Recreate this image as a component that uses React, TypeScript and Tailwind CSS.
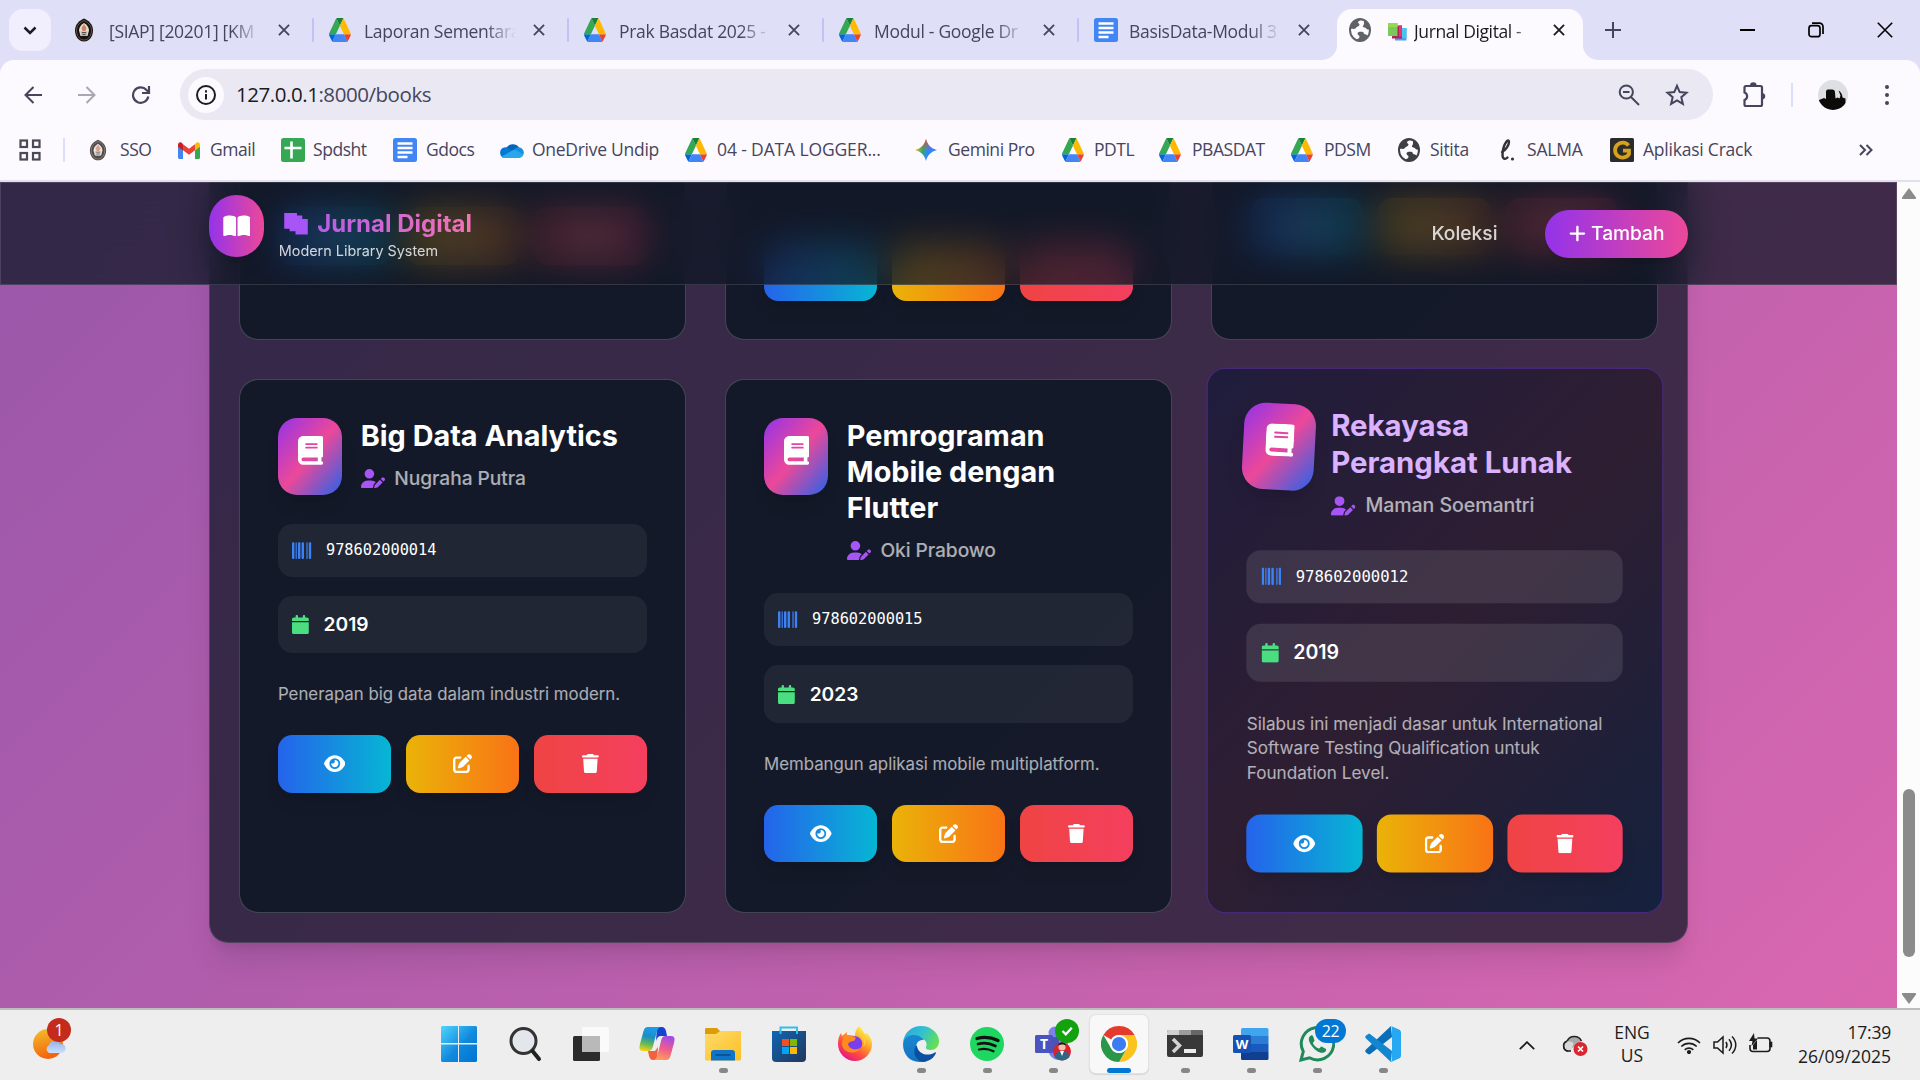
import type { ReactNode } from "react";
import {
  FaBarcode,
  FaBook,
  FaBookOpen,
  FaCalendar,
  FaEye,
  FaPenToSquare,
  FaPlus,
  FaTrash,
  FaUserPen,
} from "react-icons/fa6";

/* ---------- Favicons ---------- */

function DriveIcon({ className = "h-6 w-[22px]" }: { className?: string }) {
  return (
    <svg viewBox="0 0 88 78" preserveAspectRatio="none" className={className}>
      <path d="M6.6 66.9l3.9 6.6c.8 1.4 2 2.5 3.3 3.3L27.5 53H0c0 1.6.4 3.1 1.2 4.5z" fill="#0066da" />
      <path d="M43.7 25L29.9 1.2c-1.3.8-2.5 1.9-3.3 3.3L1.2 48.5A9 9 0 0 0 0 53h27.5z" fill="#34a853" />
      <path d="M73.6 76.8c1.3-.8 2.5-1.9 3.3-3.3l9.2-16c.8-1.4 1.2-2.9 1.2-4.5H59.8l5.9 11.5z" fill="#ea4335" />
      <path d="M43.7 25L57.4 1.2C56.1.4 54.6 0 52.9 0H34.4c-1.6 0-3.2.5-4.5 1.2z" fill="#188038" />
      <path d="M59.8 53H27.5L13.8 76.8c1.3.8 2.8 1.2 4.5 1.2h50.7c1.6 0 3.2-.5 4.5-1.2z" fill="#4285f4" />
      <path d="M73.4 26.5L60.7 4.5c-.8-1.4-2-2.5-3.3-3.3L43.7 25l16.1 28h27.4c0-1.6-.4-3.1-1.2-4.5z" fill="#ffba00" />
    </svg>
  );
}

function DocsIcon() {
  return (
    <svg viewBox="0 0 24 24" className="size-6">
      <rect width="24" height="24" rx="2.5" fill="#4285f4" />
      <path d="M4.5 5.500h15M4.5 10h15M4.5 14.500h15M4.5 19h10" stroke="#fff" strokeWidth="2.3" />
    </svg>
  );
}

function SheetIcon() {
  return (
    <svg viewBox="0 0 24 24" className="size-6">
      <rect width="24" height="24" rx="2.5" fill="#34a853" />
      <path d="M3.5 10h17M10.5 3.5v17" stroke="#fff" strokeWidth="2.6" />
    </svg>
  );
}

function Emblem({ faded = false }: { faded?: boolean }) {
  return (
    <svg viewBox="0 0 20 24" className={faded ? "h-[22px] w-[18px] opacity-75" : "h-6 w-5"}>
      <path d="M10 .5c4 2 9 5 9 12 0 5-3 11-9 11s-9-6-9-11c0-7 5-10 9-12z" fill="#17120f" />
      <path d="M10 2.500c3 1.500 7.500 4 7.500 10 0 4-2.500 9.500-7.500 9.500s-7.500-5.500-7.500-9.500c0-6 4.500-8.500 7.500-10z" fill="none" stroke="#8a7565" strokeWidth=".7" />
      <path d="M10 5c2.500 1.500 5 4 5 7.500l-1.500 5.500h-7L5 12.500C5 9 7.500 6.500 10 5z" fill="#e8dcd4" />
      <path d="M10 6l2.500 4-1 3h-3l-1-3z" fill="#c98563" />
      <path d="M6.500 13.500h7l-1 4.500h-5z" fill="#b9b3ae" />
      <path d="M8 14.500h4M8.500 16.500h3" stroke="#333" strokeWidth=".8" />
    </svg>
  );
}

function GlobeIcon({ color = "#5f6368" }: { color?: string }) {
  return (
    <svg viewBox="0 0 22 22" preserveAspectRatio="none" className="h-6 w-[22px]">
      <circle cx="11" cy="11" r="10" fill="none" stroke={color} strokeWidth="2" />
      <path
        d="M12.500 1.500c-1 .5-3.500 1-3.500 2.500 0 1.300 1.500 1 1.500 2.200S8.300 7.700 7.500 8.500 6.500 10 5 10s-3-.5-4 0A10 10 0 0 1 12.500 1.500zM7 21c.5-1.500 3.500-2 3.500-3.700 0-1.600-2-1.300-2-3s2-1.800 3.500-1.800 2.800.2 2.800 1.500 2.700.5 3.700 2.500A10 10 0 0 1 7 21zM15 5c0 1.500-1.500 2-1 3s2.500.5 3 1.500 2.500 1.500 4 1.500C21 8 19 3 15 2z"
        fill={color}
      />
    </svg>
  );
}

function GmailIcon() {
  return (
    <svg viewBox="0 0 22 17" className="h-[17px] w-[22px]">
      <path d="M0 2.500V15.500C0 16.300.7 17 1.500 17H5V7z" fill="#4285f4" />
      <path d="M22 2.500V15.500c0 .8-.7 1.500-1.500 1.500H17V7z" fill="#34a853" />
      <path d="M5 2.200V8.300L11 12.800l6-4.500V2.200L11 6.700z" fill="#ea4335" />
      <path d="M0 2.500C0 .4 2.300-.6 3.800.8L5 2.200V8.500L0 4.700z" fill="#c5221f" />
      <path d="M22 2.500c0-2.100-2.300-3.100-3.800-1.700L17 2.200v6.300l5-3.800z" fill="#fbbc04" />
    </svg>
  );
}

function OneDriveIcon() {
  return (
    <svg viewBox="0 0 25 16" className="h-4 w-[25px]">
      <path d="M7 6.500A7.500 7.500 0 0 1 20 5.500L15 12 5 7z" fill="#0364b8" />
      <path d="M5.500 5.500c1.500-.4 3 0 4 .8L18 11 6 16a5.300 5.300 0 0 1-.5-10.500z" fill="#0078d4" />
      <path d="M15.500 7A5 5 0 0 1 20 5.300a5.300 5.300 0 0 1 4.500 7L13 12z" fill="#1490df" />
      <path d="M5.500 16h14.300c2.400 0 4.500-1.700 4.700-3.700L15 7.600 2.500 14.700C3.300 15.500 4.400 16 5.500 16z" fill="#28a8ea" />
    </svg>
  );
}

function GeminiIcon() {
  return (
    <svg viewBox="0 0 22 22" className="size-[22px]">
      <defs>
        <linearGradient id="gem" x1="0" y1=".4" x2="1" y2=".6">
          <stop offset="0" stopColor="#f9c513" />
          <stop offset=".35" stopColor="#34a868" />
          <stop offset=".6" stopColor="#3186ff" />
          <stop offset="1" stopColor="#3186ff" />
        </linearGradient>
        <linearGradient id="gem2" x1="0" y1="0" x2="0" y2="1">
          <stop offset="0" stopColor="#f0433a" />
          <stop offset=".5" stopColor="#f0433a" stopOpacity="0" />
        </linearGradient>
      </defs>
      <path d="M11 0c1.200 5.500 5 9.500 11 11-6 1.500-9.800 5.500-11 11-1.200-5.500-5-9.500-11-11C6 9.500 9.800 5.500 11 0z" fill="url(#gem)" />
      <path d="M11 0c1.200 5.500 5 9.500 11 11-6 1.500-9.800 5.500-11 11-1.200-5.500-5-9.500-11-11C6 9.500 9.800 5.500 11 0z" fill="url(#gem2)" />
    </svg>
  );
}

function SalmaIcon() {
  return (
    <svg viewBox="0 0 16 22" className="h-[22px] w-4">
      <path d="M3 13c4-2 7-7 7-10 0-2-1.500-2-2.500-.5C5 6 3.500 12 3.500 16c0 4 2.500 5 5 2.500" fill="none" stroke="#333" strokeWidth="2.400" strokeLinecap="round" />
      <circle cx="13.500" cy="20" r="1.600" fill="#333" />
    </svg>
  );
}

function CrackIcon() {
  return (
    <svg viewBox="0 0 24 24" className="size-6">
      <rect width="24" height="24" rx="1.500" fill="#2b2b2b" />
      <path d="M18.500 7.500A7.500 7.500 0 1 0 19 16v-3.300h-6" fill="none" stroke="#d4a21c" strokeWidth="3.800" />
    </svg>
  );
}

function BooksEmoji() {
  return (
    <svg viewBox="0 0 19 18" className="h-[18px] w-[19px]">
      <rect x="7" y="5" width="11.500" height="12.500" fill="#45a5e8" />
      <rect x="13" y="5" width="5.500" height="10" fill="#4cc3f0" />
      <rect x="4" y="2.500" width="10" height="13" fill="#b0235e" />
      <rect x="11" y="2.500" width="3" height="11" fill="#e8336d" />
      <rect x="0" y="0" width="9.500" height="13" fill="#7bc95a" />
      <rect x="0" y="0" width="9.500" height="4" fill="#98d850" />
    </svg>
  );
}

function Cross({ className = "size-[13px]" }: { className?: string }) {
  return (
    <svg viewBox="0 0 13 13" className={className} fill="none" stroke="currentColor" strokeWidth="2">
      <path d="M1 1l11 11M12 1L1 12" />
    </svg>
  );
}

/* ---------- Browser chrome ---------- */

const tabs: { icon: ReactNode; title: string }[] = [
  { icon: <Emblem />, title: "[SIAP] [20201] [KM" },
  { icon: <DriveIcon />, title: "Laporan Sementara" },
  { icon: <DriveIcon />, title: "Prak Basdat 2025 -" },
  { icon: <DriveIcon />, title: "Modul - Google Dr" },
  { icon: <DocsIcon />, title: "BasisData-Modul 3" },
];

function TabStrip() {
  return (
    <div className="flex h-[60px] w-full bg-[#e0dff8] text-[#45455c]">
      <div className="flex w-[59px] shrink-0 items-center pl-[9px]">
        <div className="flex h-[42px] w-[42px] items-center justify-center rounded-[14px] bg-[#f1eefe] text-[#1b1b22]">
          <svg viewBox="0 0 14 9" className="h-[9px] w-[14px]" fill="none" stroke="currentColor" strokeWidth="2.500">
            <path d="M1.500 1.500L7 7l5.500-5.500" />
          </svg>
        </div>
      </div>
      {tabs.map((t, i) => (
        <div key={t.title} className="relative flex w-[255px] shrink-0 items-center pl-[15px]">
          <div className="flex w-[35px] shrink-0 items-center">{t.icon}</div>
          <div className="w-[152px] whitespace-nowrap pt-[3px] text-[17.500px] tracking-[-0.3px] [mask-image:linear-gradient(to_right,#000_80%,transparent)]">
            {t.title}
          </div>
          <Cross className="ml-[17px] size-[12px]" />
          {i < 4 && <div className="absolute right-0 top-[18px] h-6 w-[2px] rounded bg-[#c2c1fa]" />}
        </div>
      ))}
      <div className="relative mt-[9px] flex w-[246px] shrink-0 items-center rounded-t-[15px] bg-[#fcf9ff] pb-[9px] pl-[12px] text-[#1b1b22] ml-[3px]">
        <svg viewBox="0 0 15 15" className="absolute -left-[15px] bottom-0 size-[15px]">
          <path d="M15 0v15H0A15 15 0 0 0 15 0z" fill="#fcf9ff" />
        </svg>
        <svg viewBox="0 0 15 15" className="absolute -right-[15px] bottom-0 size-[15px]">
          <path d="M0 0v15h15A15 15 0 0 1 0 0z" fill="#fcf9ff" />
        </svg>
        <GlobeIcon />
        <div className="ml-[17px] mt-1">
          <BooksEmoji />
        </div>
        <div className="ml-[7px] w-[118px] whitespace-nowrap pt-[3px] text-[17.500px] tracking-[-0.4px] [mask-image:linear-gradient(to_right,#000_84%,transparent)]">
          Jurnal Digital -
        </div>
        <Cross className="ml-[21px] size-[12px]" />
      </div>
      <div className="flex flex-1 items-center pl-[22px]">
        <svg viewBox="0 0 16 16" className="size-4" stroke="currentColor" strokeWidth="2">
          <path d="M8 0v16M0 8h16" />
        </svg>
        <div className="ml-auto flex w-[180px] items-center justify-between pr-[27px] text-black">
          <div className="h-[2px] w-[15px] bg-black" />
          <svg viewBox="0 0 16 16" className="size-4" fill="none" stroke="currentColor" strokeWidth="1.700">
            <rect x="1" y="3.700" width="11" height="11" rx="2.500" />
            <path d="M4 1.200h7.500a3.500 3.500 0 0 1 3.500 3.500V12" />
          </svg>
          <svg viewBox="0 0 16 16" className="size-4" fill="none" stroke="currentColor" strokeWidth="1.600">
            <path d="M.8.8l14.400 14.400M15.200.8L.8 15.200" />
          </svg>
        </div>
      </div>
    </div>
  );
}

function Toolbar() {
  return (
    <div className="flex h-[60px] items-center pl-[24px] pt-[9px] text-[#45455c]">
      <svg viewBox="0 0 18 18" className="size-[18px]" fill="none" stroke="currentColor" strokeWidth="2">
        <path d="M18 9H2M9.500 1L1.500 9l8 8" />
      </svg>
      <svg viewBox="0 0 18 18" className="ml-9 size-[18px] text-[#a9a7b4]" fill="none" stroke="currentColor" strokeWidth="2">
        <path d="M0 9h16M8.500 1l8 8-8 8" />
      </svg>
      <svg viewBox="0 0 20 18" className="ml-[35px] mr-px h-[18px] w-5" fill="none" stroke="currentColor" strokeWidth="2.200">
        <path d="M17.300 10.500A7.700 7.700 0 1 1 15.500 4L17.500 6" />
        <path d="M18 0v7h-7" />
      </svg>
      <div className="ml-[28px] flex h-[51px] w-[1533px] items-center rounded-full bg-[#eae8f3] pl-[8px]">
        <div className="flex size-9 items-center justify-center rounded-full bg-[#fcf9ff] text-[#1b1b22]">
          <svg viewBox="0 0 20 20" className="size-5" fill="none" stroke="currentColor" strokeWidth="2">
            <circle cx="10" cy="10" r="9" />
            <path d="M10 9v5.500M10 5.300v2.200" />
          </svg>
        </div>
        <div className="ml-[12px] text-[20.500px] tracking-[-0.45px] text-[#45455c]">
          <span className="text-[#1b1b22]">127.0.0.1</span>:8000/books
        </div>
        <svg viewBox="0 0 22 22" className="ml-auto mr-[25px] size-[22px]" fill="none" stroke="currentColor" strokeWidth="2">
          <circle cx="8.300" cy="8" r="6.600" />
          <path d="M13 13l8 8M5 8h6.500" />
        </svg>
        <svg viewBox="0 0 24 24" className="mr-[24px] size-6" fill="none" stroke="currentColor" strokeWidth="2">
          <path d="M12 2.800l2.700 6.300 6.800.6-5.200 4.500 1.600 6.700-5.900-3.600-5.900 3.600 1.600-6.700-5.200-4.500 6.800-.6z" />
        </svg>
      </div>
      <svg viewBox="0 0 26 26" className="ml-[28px] size-[26px]">
        <path
          d="M3.500 5.500a1.500 1.500 0 0 1 1.500-1.500h14.500A1.500 1.500 0 0 1 21 5.500v17a1.500 1.500 0 0 1-1.500 1.500H5a1.500 1.500 0 0 1-1.500-1.500V18a4 4 0 0 0 0-7.500z"
          fill="none"
          stroke="currentColor"
          strokeWidth="2.200"
        />
        <path d="M9 3.500a3.300 3.300 0 0 1 6.600 0zM21.500 11a3.300 3.300 0 0 1 0 6.500z" fill="currentColor" />
      </svg>
      <div className="ml-[24px] h-6 w-[2px] bg-[#dcdffc]" />
      <svg viewBox="0 0 30 30" className="ml-[25px] size-[30px]">
        <defs>
          <clipPath id="av">
            <circle cx="15" cy="15" r="15" />
          </clipPath>
        </defs>
        <g clipPath="url(#av)">
          <rect width="30" height="30" fill="#dedfe2" />
          <path d="M1 20l5-2 2 1v-7c0-2 1-2.500 3-2.500h3c2 0 3 1 3 3l.500 6 2-1 2 1 1-3-2-5c2 1 4 4 4 7l3 1v12H0z" fill="#0d0b09" />
        </g>
      </svg>
      <div className="ml-[37px] flex flex-col gap-1">
        <i className="size-1 rounded-full bg-[#45455c]" />
        <i className="size-1 rounded-full bg-[#45455c]" />
        <i className="size-1 rounded-full bg-[#45455c]" />
      </div>
    </div>
  );
}

const bookmarks: { icon: ReactNode; label: string; box: string; slot: string; tracking?: string }[] = [
  { icon: <Emblem faded />, label: "SSO", box: "w-[89px]", slot: "w-[31px]" },
  { icon: <GmailIcon />, label: "Gmail", box: "w-[103px]", slot: "w-[32px]" },
  { icon: <SheetIcon />, label: "Spdsht", box: "w-[112px]", slot: "w-[32px]" },
  { icon: <DocsIcon />, label: "Gdocs", box: "w-[106px]", slot: "w-[33px]" },
  { icon: <OneDriveIcon />, label: "OneDrive Undip", box: "w-[186px]", slot: "w-[33px]", tracking: "tracking-[-0.28px]" },
  { icon: <DriveIcon />, label: "04 - DATA LOGGER...", box: "w-[230px]", slot: "w-[32px]", tracking: "tracking-[-0.13px]" },
  { icon: <GeminiIcon />, label: "Gemini Pro", box: "w-[147px]", slot: "w-[33px]" },
  { icon: <DriveIcon />, label: "PDTL", box: "w-[97px]", slot: "w-[32px]" },
  { icon: <DriveIcon />, label: "PBASDAT", box: "w-[132px]", slot: "w-[33px]" },
  { icon: <DriveIcon />, label: "PDSM", box: "w-[107px]", slot: "w-[33px]" },
  { icon: <GlobeIcon color="#3c4043" />, label: "Sitita", box: "w-[101px]", slot: "w-[32px]", tracking: "tracking-[-0.3px]" },
  { icon: <SalmaIcon />, label: "SALMA", box: "w-[111px]", slot: "w-[28px]", tracking: "tracking-[-0.2px]" },
  { icon: <CrackIcon />, label: "Aplikasi Crack", box: "w-[160px]", slot: "w-[33px]", tracking: "tracking-[-0.22px]" },
];

function BookmarksBar() {
  return (
    <div className="flex h-[60px] items-center pl-[19px] text-[#45455c]">
      <svg viewBox="0 0 22 22" className="size-[22px]" fill="none" stroke="#4a4a55" strokeWidth="2.200">
        <rect x="1.500" y="1.500" width="6.500" height="6.500" />
        <rect x="14" y="1.500" width="6.500" height="6.500" />
        <rect x="1.500" y="14" width="6.500" height="6.500" />
        <rect x="14" y="14" width="6.500" height="6.500" />
      </svg>
      <div className="ml-[22px] mr-[24px] h-6 w-[2px] bg-[#dcdffc]" />
      {bookmarks.map((b) => (
        <div key={b.label} className={`flex shrink-0 items-center ${b.box}`}>
          <div className={`flex shrink-0 ${b.slot}`}>{b.icon}</div>
          <span className={`whitespace-nowrap pb-[2px] text-[17.500px] ${b.tracking ?? "tracking-[-0.45px]"}`}>{b.label}</span>
        </div>
      ))}
      <svg viewBox="0 0 14 12" className="ml-auto mr-[47px] h-3 w-[14px] shrink-0" fill="none" stroke="currentColor" strokeWidth="2">
        <path d="M1 1l5 5-5 5M7.500 1l5 5-5 5" />
      </svg>
    </div>
  );
}

/* ---------- Library page ---------- */

type Book = {
  title: string;
  author: string;
  isbn: string;
  year: string;
  description: string;
  active?: boolean;
};

const books: Book[] = [
  {
    title: "Big Data Analytics",
    author: "Nugraha Putra",
    isbn: "978602000014",
    year: "2019",
    description: "Penerapan big data dalam industri modern.",
  },
  {
    title: "Pemrograman Mobile dengan Flutter",
    author: "Oki Prabowo",
    isbn: "978602000015",
    year: "2023",
    description: "Membangun aplikasi mobile multiplatform.",
  },
  {
    title: "Rekayasa Perangkat Lunak",
    author: "Maman Soemantri",
    isbn: "978602000012",
    year: "2019",
    description: "Silabus ini menjadi dasar untuk International Software Testing Qualification untuk Foundation Level.",
    active: true,
  },
];

function Actions({ bare = false }: { bare?: boolean }) {
  const base = "flex h-12 items-center justify-center rounded-xl text-white shadow-lg";
  return (
    <div className="grid grid-cols-3 gap-3">
      <div className={`${base} bg-linear-to-r/srgb from-[#2563eb] to-[#06b6d4]`}>
        {!bare && <FaEye className="h-4 w-[18px]" />}
      </div>
      <div className={`${base} bg-linear-to-r/srgb from-[#eab308] to-[#f97316]`}>
        {!bare && <FaPenToSquare className="size-4" />}
      </div>
      <div className={`${base} bg-linear-to-r/srgb from-[#ef4444] to-[#f43f5e]`}>
        {!bare && <FaTrash className="h-4 w-[14px]" />}
      </div>
    </div>
  );
}

function BookCard({ book }: { book: Book }) {
  const { active } = book;
  return (
    <div
      className={
        active
          ? "h-[445.500px] -translate-y-[5px] scale-[1.02] rounded-2xl border border-[#4c2889] bg-[linear-gradient(135deg,#1f1c3c,#2e1e32_50%,#14213d)] p-8"
          : "h-[445.500px] rounded-2xl border border-white/20 bg-[rgba(17,24,39,0.92)] p-8"
      }
    >
      <div className="mb-6 flex items-start gap-4">
        <div
          className={`flex h-16 w-[53px] shrink-0 items-center justify-center rounded-2xl bg-linear-to-br/srgb from-[#9333ea] via-[#ec4899] to-[#2563eb] pb-[10px] pl-px text-white shadow-lg ${
            active ? "rotate-3 scale-110" : ""
          }`}
        >
          <FaBook className="h-6 w-[21px]" />
        </div>
        <div className="min-w-0 flex-1 pr-2">
          <h3 className={`mb-2 text-2xl leading-[30px] font-bold ${active ? "text-purple-300" : "text-white"}`}>
            {book.title}
          </h3>
          <div className="flex items-center gap-2">
            <FaUserPen className="h-4 w-5 text-[#a855f7]" />
            <span className="font-medium tracking-[-0.06px] text-white/65">{book.author}</span>
          </div>
        </div>
      </div>
      <div className="mb-6 flex flex-col gap-4">
        <div className={`flex h-11 items-center gap-3 rounded-xl px-3 ${active ? "bg-white/10" : "bg-white/[0.06]"}`}>
          <FaBarcode className="size-4 text-[#3b82f6]" />
          <span className="font-['DejaVu_Sans_Mono',monospace] text-[12.750px] text-white">{book.isbn}</span>
        </div>
        <div className={`flex h-12 items-center gap-3 rounded-xl px-3 ${active ? "bg-white/10" : "bg-white/[0.06]"}`}>
          <FaCalendar className="h-4 w-[14px] text-[#4ade80]" />
          <span className="font-semibold text-white">{book.year}</span>
        </div>
      </div>
      <p className="mb-6 text-sm leading-5 text-white/65">{book.description}</p>
      <Actions />
    </div>
  );
}

function PageNav() {
  return (
    <nav className="absolute inset-x-0 top-0 flex h-[86px] items-center justify-between border border-white/[0.125] bg-[rgba(17,24,39,0.75)] px-[173px] backdrop-blur-lg">
      <div className="flex items-center gap-3">
        <div className="mb-[12.500px] flex h-[52px] w-[46.500px] items-center justify-center rounded-full bg-linear-to-r/srgb from-[#9333ea] to-[#ec4899] text-white shadow-lg">
          <FaBookOpen className="h-5 w-[23px]" />
        </div>
        <div>
          <div className="flex h-7 items-center">
            <svg viewBox="0 0 24 22" className="ml-1 mr-2 h-[18px] w-5">
              <path d="M0 0h13v2.600h5.400V6H24v16H11.500v-3.300H5.500V16H0z" fill="#a855f7" />
            </svg>
            <span className="bg-linear-to-r/srgb from-[#b55de9] to-[#f472b6] bg-clip-text text-xl font-bold text-transparent">
              Jurnal Digital
            </span>
          </div>
          <div className="text-xs text-white/80">Modern Library System</div>
        </div>
      </div>
      <div className="flex items-center gap-10 font-medium">
        <span className="text-white/80">Koleksi</span>
        <div className="flex h-10 items-center gap-1 rounded-full bg-linear-to-r/srgb from-[#9333ea] to-[#ec4899] px-5 text-white shadow-lg">
          <FaPlus className="h-4 w-[14px]" />
          <span className="tracking-[-0.03px]">Tambah</span>
        </div>
      </div>
    </nav>
  );
}

function LibraryPage() {
  const row = "h-[180px] rounded-2xl border border-white/20 bg-[rgba(17,24,39,0.92)] px-8 flex flex-col justify-end";
  return (
    <div className="h-[826px] w-[1897px] overflow-hidden">
      <div className="relative flex h-full w-full flex-col justify-end overflow-hidden bg-[linear-gradient(135deg,#9957aa,#d967b0)] px-[174px] pb-[54px] font-['Inter',sans-serif] [zoom:1.2]">
        <div className="rounded-2xl border border-white/[0.125] bg-[rgba(17,24,39,0.75)] p-6 shadow-xl">
          <div className="grid grid-cols-3 gap-8">
            <div className={`${row} pb-[62px]`}>
              <Actions />
            </div>
            <div className={`${row} pb-8`}>
              <Actions bare />
            </div>
            <div className={`${row} pb-[70px]`}>
              <Actions />
            </div>
            {books.map((b) => (
              <BookCard key={b.isbn} book={b} />
            ))}
          </div>
        </div>
        <PageNav />
      </div>
    </div>
  );
}

function ScrollBar() {
  return (
    <div className="flex w-[23px] flex-col items-center bg-[#fcfcfc]">
      <svg viewBox="0 0 14 11" className="mt-[6px] h-[11px] w-[14px]">
        <path d="M7 0l7 9.500a1 1 0 0 1-1 1.500H1a1 1 0 0 1-1-1.500z" fill="#8b8b8b" />
      </svg>
      <div className="mt-[590px] h-[168px] w-[12px] rounded-full bg-[#8b8b8b]" />
      <svg viewBox="0 0 14 11" className="mb-[4px] mt-auto h-[11px] w-[14px]">
        <path d="M7 11l7-9.500A1 1 0 0 0 13 0H1a1 1 0 0 0-1 1.500z" fill="#8b8b8b" />
      </svg>
    </div>
  );
}

/* ---------- Taskbar ---------- */

function WindowsLogo() {
  return (
    <svg viewBox="0 0 36 36" className="size-9">
      <defs>
        <linearGradient id="win" x1="0" y1="0" x2="1" y2="1">
          <stop offset="0" stopColor="#4fd4ff" />
          <stop offset=".55" stopColor="#1089dd" />
          <stop offset="1" stopColor="#0073d2" />
        </linearGradient>
      </defs>
      <path d="M1 0h16v17H0V1zM18 0h17l1 1v16H18zM0 18.500h17V36H1l-1-1zM18 18.500h18V35l-1 1H18z" fill="url(#win)" />
    </svg>
  );
}

function SearchGlyph() {
  return (
    <svg viewBox="0 0 36 36" className="size-9" fill="none">
      <circle cx="16.500" cy="15" r="12.500" fill="#e3e6ea" stroke="#333" strokeWidth="3" />
      <path d="M25.500 25l6.500 8" stroke="#222" strokeWidth="4" strokeLinecap="round" />
    </svg>
  );
}

function TaskView() {
  return (
    <svg viewBox="0 0 36 36" className="size-9">
      <rect x="0" y="10" width="27" height="25" rx="1.500" fill="#2b2b2b" />
      <rect x="9" y="1" width="27" height="25" rx="1.500" fill="#fafafa" />
      <rect x="9" y="10" width="18" height="16" fill="#b9b9b9" />
    </svg>
  );
}

function Copilot() {
  return (
    <svg viewBox="0 0 36 36" className="size-9">
      <defs>
        <linearGradient id="co1" x1=".5" y1="0" x2=".3" y2="1">
          <stop offset="0" stopColor="#1b9cf0" />
          <stop offset=".4" stopColor="#1a8fc4" />
          <stop offset=".7" stopColor="#5fb85a" />
          <stop offset="1" stopColor="#f5d215" />
        </linearGradient>
        <linearGradient id="co2" x1=".6" y1="0" x2=".3" y2="1">
          <stop offset="0" stopColor="#a34be8" />
          <stop offset=".5" stopColor="#ee5d8c" />
          <stop offset="1" stopColor="#ffa057" />
        </linearGradient>
      </defs>
      <path d="M18 1h5c2 0 3 1 4 4l1 5h-6c-3 0-4 2-5 5z" fill="#1544cf" />
      <path d="M9 1h13c-3 0-4 4-5 8l-3 11c-1 4-2 5-5 5H4c-4 0-4-3-3-7L4 7c1-4 2-6 5-6z" fill="url(#co1)" />
      <path d="M9 25h7l3-4-1 13h-4c-2 0-3-1-4-4z" fill="#f0623f" />
      <path d="M27 34H14c3 0 4-3 5-7l3-12c1-4 2-5 5-5h5c4 0 4 3 3 7l-3 11c-1 4-2 6-5 6z" fill="url(#co2)" />
    </svg>
  );
}

function Explorer() {
  return (
    <svg viewBox="0 0 36 36" className="size-9">
      <defs>
        <linearGradient id="ex" x1="0" y1="0" x2="1" y2="1">
          <stop offset="0" stopColor="#ffda6b" />
          <stop offset="1" stopColor="#fcc024" />
        </linearGradient>
      </defs>
      <path d="M0 3.500C0 2.500.5 2 1.500 2H12l3.500 3.500V10H0z" fill="#dc9c0a" />
      <path d="M0 8h11l4-3h21v28.500l-1 1H1l-1-1z" fill="url(#ex)" />
      <path d="M6 34.500V27a3 3 0 0 1 3-3h18a3 3 0 0 1 3 3v7.500z" fill="#0e74c7" />
      <path d="M10.500 29h15" stroke="#0a4a86" strokeWidth="1.500" />
    </svg>
  );
}

function Store() {
  return (
    <svg viewBox="0 0 36 36" className="size-9">
      <defs>
        <linearGradient id="st" x1="0" y1="0" x2="1" y2="1">
          <stop offset="0" stopColor="#0f66b5" />
          <stop offset="1" stopColor="#23365a" />
        </linearGradient>
      </defs>
      <path d="M9.500 7V1.500h16.500V7" fill="none" stroke="#30bdf2" strokeWidth="2" />
      <path d="M1 5h34v27a4 4 0 0 1-4 4H5a4 4 0 0 1-4-4z" fill="url(#st)" />
      <path d="M9.500 8V4.500M26 8V4.500" stroke="#30bdf2" strokeWidth="2" />
      <path d="M11 13h7v7h-7z" fill="#f25022" />
      <path d="M19 13h7v7h-7z" fill="#7fba00" />
      <path d="M11 21h7v7h-7z" fill="#00a4ef" />
      <path d="M19 21h7v7h-7z" fill="#ffb900" />
    </svg>
  );
}

function Firefox() {
  return (
    <svg viewBox="0 0 36 36" className="size-9">
      <defs>
        <linearGradient id="ff" x1=".8" y1=".1" x2=".2" y2=".95">
          <stop offset="0" stopColor="#fff44f" />
          <stop offset=".35" stopColor="#ffa12b" />
          <stop offset=".65" stopColor="#ff4f3e" />
          <stop offset="1" stopColor="#e3128a" />
        </linearGradient>
      </defs>
      <path d="M22 0c4 3 4 6 6 8l2-1c3 3 5 7 5 11a17 17 0 0 1-34 0c0-5 1-8 3-11l1 3 5-4v3c3 0 6 0 8 1 0-4 1-7 4-10z" fill="url(#ff)" />
      <circle cx="18" cy="17.500" r="7.200" fill="#7b3df0" />
      <path d="M6 10c5-2 9 0 13 2l-2 3c-3 0-5 1-6 3 1 5 7 7 12 4-3 7-16 6-18-3z" fill="#ff8a1d" />
      <path d="M23 9c4 3 5 7 3 12 3-2 4-9 0-13z" fill="#ffcf3a" />
    </svg>
  );
}

function Edge() {
  return (
    <svg viewBox="0 0 36 36" className="size-9">
      <defs>
        <linearGradient id="ed" x1="0" y1=".2" x2="1" y2=".6">
          <stop offset="0" stopColor="#2da7e0" />
          <stop offset=".5" stopColor="#33c1cf" />
          <stop offset="1" stopColor="#66e04f" />
        </linearGradient>
        <linearGradient id="ed2" x1="0" y1="0" x2="0" y2="1">
          <stop offset="0" stopColor="#1b87d0" />
          <stop offset="1" stopColor="#1272c4" />
        </linearGradient>
      </defs>
      <path d="M0 17C1 6 9 0 18 0c11 0 18 8 18 15 0 6-4 9-8 9-3 0-6-1-5-3 2-4-1-8-5-8-6-3-14-3-18 4z" fill="url(#ed)" />
      <path d="M0 18C1 11 6 9 11 9c5 0 9 3 10 6-6-2-8 3-8 7 0 7 6 12 10 13C9 39 0 30 0 18z" fill="url(#ed2)" />
      <path d="M14 19c-6 6-1 16 6 17 6-.5 11-4 13-9 0-1-1-1-2 0-8 4-17 0-17-8z" fill="#0b4fa0" />
      <path d="M20 14c3 0 4 4 2 7-1 3 4 4 8 3-5 3-12 2-15-2-2-4 0-8 5-8z" fill="#eee" />
    </svg>
  );
}

function Spotify() {
  return (
    <svg viewBox="0 0 36 36" className="size-9" fill="none" stroke="#111" strokeLinecap="round">
      <circle cx="18" cy="18" r="17" fill="#1ed760" stroke="none" />
      <path d="M8 12.500c7-2 15-1 21 2" strokeWidth="3.300" />
      <path d="M9 18c6-1.500 12-.8 17.500 2" strokeWidth="2.700" />
      <path d="M10 23.500c5-1.200 10-.5 14.500 1.800" strokeWidth="2.200" />
    </svg>
  );
}

function Teams() {
  return (
    <div className="relative size-9">
      <svg viewBox="0 0 36 36" className="size-9">
        <circle cx="20" cy="7" r="6.500" fill="#7b83eb" />
        <path d="M13 12h20v12c0 6-4 10-9 10s-9-3-11-9z" fill="#7b83eb" />
        <path d="M14 11h10v14H13z" fill="#4e50b8" />
        <rect x="0" y="9" width="18" height="18" rx="1.500" fill="#4b53bc" />
        <circle cx="27" cy="25.500" r="9" fill="#d8232f" />
        <path d="M19.500 31c1-5 4-6 7.500-6s6.500 1 7.500 6c-4 4.500-11 4.500-15 0z" fill="#2f6688" />
        <path d="M25 25h4l-2 5z" fill="#fff" />
        <circle cx="27" cy="21" r="3.600" fill="#efc5a5" />
        <path d="M23 20c0-5 8-5 8 0-1-2-6-2-8 0z" fill="#211a1a" />
      </svg>
      <span className="absolute left-0 top-[9px] w-[18px] text-center text-[14px] leading-[18px] font-bold text-white">T</span>
      <svg viewBox="0 0 24 24" className="absolute -top-[7px] left-[20px] size-6">
        <circle cx="12" cy="12" r="12" fill="#13a10e" />
        <path d="M7.500 12l3.300 3.300 6-6.500" fill="none" stroke="#fff" strokeWidth="2.300" />
      </svg>
    </div>
  );
}

function Chrome() {
  return (
    <svg viewBox="0 0 48 48" className="size-9">
      <path d="M24 0a24 24 0 0 1 20.800 12H24a12 12 0 0 0-10.400 6L3.200 12A24 24 0 0 1 24 0z" fill="#e33b2e" />
      <path d="M44.800 12A24 24 0 0 1 24 48l10.400-18A12 12 0 0 0 34.400 18 12 12 0 0 0 24 12z" fill="#fcc31e" />
      <path d="M3.200 12l10.400 18A12 12 0 0 0 34.400 30L24 48A24 24 0 0 1 3.200 12z" fill="#2a9748" />
      <circle cx="24" cy="24" r="12" fill="#fff" />
      <circle cx="24" cy="24" r="9.500" fill="#3b7df0" />
    </svg>
  );
}

function Terminal() {
  return (
    <svg viewBox="0 0 36 36" className="size-9">
      <rect x="0" y="4" width="36" height="27" rx="2" fill="#383838" />
      <path d="M2 4h10v5H0V6a2 2 0 0 1 2-2z" fill="#cfcfcf" />
      <path d="M12 4h12v5H12z" fill="#9c9c9c" />
      <path d="M24 4h10a2 2 0 0 1 2 2v3H24z" fill="#676767" />
      <path d="M6 13l6.500 6.500L6 26" fill="none" stroke="#d4d4d4" strokeWidth="3.500" />
      <rect x="17" y="23" width="12" height="4" fill="#ececec" />
    </svg>
  );
}

function Word() {
  return (
    <div className="relative size-9">
      <svg viewBox="0 0 36 36" className="size-9">
        <path d="M8 3.500A1.500 1.500 0 0 1 9.500 2h24.500A1.500 1.500 0 0 1 35.500 3.500V10H8z" fill="#41a5ee" />
        <path d="M8 10h27.500v8H8z" fill="#2b7cd3" />
        <path d="M8 18h27.500v8H8z" fill="#185abd" />
        <path d="M8 26h27.500v6.500a1.500 1.500 0 0 1-1.500 1.500H9.500A1.500 1.500 0 0 1 8 32.500z" fill="#103f91" />
        <rect x="0" y="9" width="18" height="18" rx="1.500" fill="#1453b5" />
      </svg>
      <span className="absolute left-0 top-[9px] w-[18px] text-center text-[13px] leading-[18px] font-bold text-white">W</span>
    </div>
  );
}

function WhatsApp() {
  return (
    <div className="relative size-9">
      <svg viewBox="0 0 36 36" className="size-9" fill="none" stroke="#1e8a5a" strokeWidth="3">
        <path d="M2 34l2.300-8.500A16.200 16.200 0 1 1 10.500 31.800z" />
        <path
          d="M12 9.500c-3 1.500-3 5 .5 10s9 8.500 12.500 7c2-1 2.500-2.500 2-3.500l-4.500-2.500c-1 0-1.500 2-2.500 2-2 0-6-4-6-5.500 0-1 1.500-1.500 1.500-2.500L14 10c-.5-.6-1.300-.8-2-.5z"
          fill="#1e8a5a"
          stroke="none"
        />
      </svg>
      <span className="absolute -top-[7px] left-[16px] flex h-6 w-[31px] items-center justify-center rounded-full bg-[#0078d4] text-[16px] tracking-tight text-white">
        22
      </span>
    </div>
  );
}

function VSCode() {
  return (
    <svg viewBox="0 0 36 36" className="size-9">
      <path d="M26 0L1 23.500c-1 1-1 2 0 3L3 28c.8.600 1.500.6 2.300 0L27 11z" fill="#0a6fb8" />
      <path d="M26 36L1 12.500c-1-1-1-2 0-3L3 8.300c.8-.600 1.500-.6 2.300 0L27 25z" fill="#1485cf" />
      <path d="M26 0l8 3.500c1.200.500 2 1.500 2 3v23c0 1.500-.8 2.500-2 3L26 36c-1 0 1-1 1-2V2c0-1-1-2-1-2z" fill="#27a8f2" />
    </svg>
  );
}

const apps: { id: string; icon: ReactNode; running?: boolean; focused?: boolean }[] = [
  { id: "start", icon: <WindowsLogo /> },
  { id: "search", icon: <SearchGlyph /> },
  { id: "tasks", icon: <TaskView /> },
  { id: "copilot", icon: <Copilot /> },
  { id: "explorer", icon: <Explorer />, running: true },
  { id: "store", icon: <Store /> },
  { id: "firefox", icon: <Firefox /> },
  { id: "edge", icon: <Edge />, running: true },
  { id: "spotify", icon: <Spotify />, running: true },
  { id: "teams", icon: <Teams />, running: true },
  { id: "chrome", icon: <Chrome />, focused: true },
  { id: "terminal", icon: <Terminal />, running: true },
  { id: "word", icon: <Word />, running: true },
  { id: "whatsapp", icon: <WhatsApp />, running: true },
  { id: "vscode", icon: <VSCode />, running: true },
];

function Weather() {
  return (
    <div className="relative ml-[33px] h-[42px] w-[39px]">
      <svg viewBox="0 0 39 42" className="h-[42px] w-[39px]">
        <defs>
          <linearGradient id="sun" x1="0" y1="0" x2=".3" y2="1">
            <stop offset="0" stopColor="#f5c22e" />
            <stop offset="1" stopColor="#f2650c" />
          </linearGradient>
          <linearGradient id="cl" x1="0" y1="0" x2="0" y2="1">
            <stop offset="0" stopColor="#8fb2ee" />
            <stop offset="1" stopColor="#cfe0fa" />
          </linearGradient>
        </defs>
        <circle cx="15" cy="26" r="15" fill="url(#sun)" />
        <path d="M16 35a4.500 4.500 0 0 1 0-8 6 6 0 0 1 11-1 4.600 4.600 0 0 1 2 9z" fill="url(#cl)" />
      </svg>
      <span className="absolute right-px top-0 flex size-6 items-center justify-center rounded-full bg-[#c42b1c] text-[16px] text-white">
        1
      </span>
    </div>
  );
}

function Taskbar() {
  return (
    <div className="flex h-[72px] items-start border-t-2 border-[#bdbdbd] bg-[#eeeeee] text-[#1c1c1c]">
      <div className="flex h-[70px] w-[426px] pt-[8px]">
        <Weather />
      </div>
      {apps.map((a) => (
        <div key={a.id} className="flex w-[66px] shrink-0 flex-col items-center pt-[5px]">
          <div
            className={`flex h-[58px] w-[58px] flex-col items-center rounded-[6px] pt-[11px] ${
              a.focused ? "bg-[#f8f8f8] shadow-[0_0_0_1px_#e2e2e2,0_1px_1px_1px_#d5d5d5]" : ""
            }`}
          >
            {a.icon}
            {a.running && <i className="mt-[6px] h-[5px] w-[9px] rounded-full bg-[#878787]" />}
            {a.focused && <i className="mt-[6px] h-[5px] w-6 rounded-full bg-[#0078d4]" />}
          </div>
        </div>
      ))}
      <div className="flex h-[70px] flex-1 items-center">
        <svg viewBox="0 0 16 9" className="ml-[103px] h-[9px] w-4" fill="none" stroke="currentColor" strokeWidth="1.800">
          <path d="M.8 8.200L8 1.200l7.200 7" />
        </svg>
        <svg viewBox="0 0 26 22" className="ml-[27px] h-[22px] w-[26px]">
          <path d="M6.500 17A5 5 0 0 1 5 7.300 8 8 0 0 1 19.500 7" fill="#a9a9a9" stroke="#222" strokeWidth="1.600" />
          <path d="M5 7.500c2-.8 5 0 6.500 2L9 17H6.500A5 5 0 0 1 5 7.500z" fill="#d8d8d8" />
          <path d="M9 17H6.500A5 5 0 0 1 5 7.300" fill="none" stroke="#222" strokeWidth="1.600" />
          <circle cx="18.500" cy="15" r="7" fill="#d9262f" />
          <path d="M16 12.500l5 5M21 12.500l-5 5" stroke="#fff" strokeWidth="1.700" />
        </svg>
        <div className="ml-[15px] w-[58px] pb-[2px] text-center text-[17.500px] leading-[23px]">
          <div>ENG</div>
          <div>US</div>
        </div>
        <svg viewBox="0 0 24 18" className="ml-[16px] h-[18px] w-6" fill="none" stroke="currentColor" strokeWidth="1.600">
          <path d="M1 7a15.500 15.500 0 0 1 22 0M4.300 10.500a11 11 0 0 1 15.400 0M7.700 13.800a6.300 6.300 0 0 1 8.600 0" />
          <circle cx="12" cy="16" r="1.300" fill="currentColor" />
        </svg>
        <svg viewBox="0 0 24 20" className="ml-[12px] h-5 w-6" fill="none" stroke="currentColor" strokeWidth="1.500">
          <path d="M1 7h3.500L10 2v16l-5.500-5H1z" />
          <path d="M13 7c1.300 2 1.300 4 0 6M16 4.300c3 3.500 3 7.900 0 11.400M19 1.500c5 5 5 12 0 17" />
        </svg>
        <svg viewBox="0 0 24 20" className="mb-1 ml-[12px] h-5 w-6" fill="none" stroke="currentColor" strokeWidth="1.600">
          <path d="M8.500 5H18a3 3 0 0 1 3 3v7.500a3 3 0 0 1-3 3H4a3 3 0 0 1-3-3V12" />
          <path d="M21 9.500h1.500v4H21z" fill="currentColor" />
          <path d="M4 16.500v-4.500l4-5v9.500z" fill="currentColor" stroke="none" />
          <path d="M5 0L0 8h3.500L2.500 13 9 5.500H5.500z" fill="currentColor" stroke="none" />
        </svg>
        <div className="ml-auto mr-[29px] pb-[2px] text-right text-[17.500px] leading-[24px]">
          <div className="tracking-[-0.2px]">17:39</div>
          <div>26/09/2025</div>
        </div>
      </div>
    </div>
  );
}

export default function App() {
  return (
    <div className="flex h-[1080px] w-[1920px] flex-col overflow-hidden bg-[#e0dff8] font-['Open_Sans',sans-serif]">
      <TabStrip />
      <div className="h-[122px] shrink-0 rounded-t-[14px] border-b-2 border-[#e2dfee] bg-[#fcf9ff]">
        <Toolbar />
        <BookmarksBar />
      </div>
      <div className="flex h-[826px] shrink-0">
        <LibraryPage />
        <ScrollBar />
      </div>
      <Taskbar />
    </div>
  );
}
